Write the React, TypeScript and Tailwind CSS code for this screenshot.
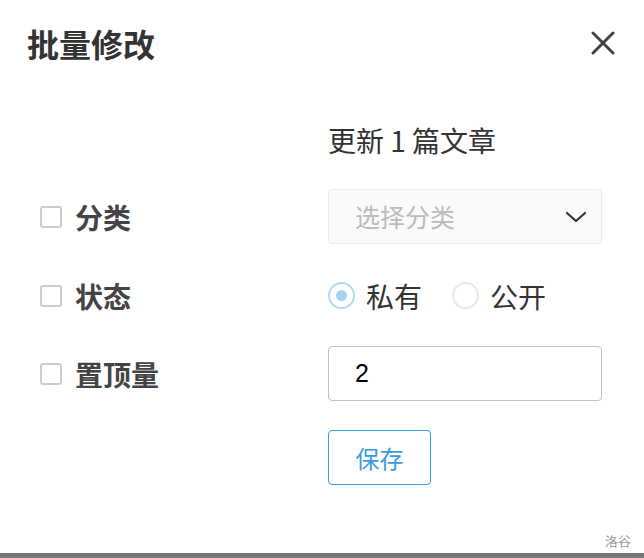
import React from "react";

const font = "font-['Noto_Sans_CJK_SC','Noto_Sans',sans-serif]";

const Checkbox: React.FC<{ label: string }> = ({ label }) => (
  <div className="flex items-center gap-[13px]">
    <span className="w-[22px] h-[22px] border-2 border-[#cccccc] rounded-[3px] bg-white" />
    <span className="text-[28px] font-bold text-[#444444] leading-none">{label}</span>
  </div>
);

const Radio: React.FC<{ label: string; checked?: boolean }> = ({ label, checked }) => (
  <div className="flex items-center gap-[11px]">
    <span
      className={
        checked
          ? "w-[27px] h-[27px] rounded-full border-[2.5px] border-[#b3d9f2] flex items-center justify-center"
          : "w-[27px] h-[27px] rounded-full border-[2.5px] border-[#e8e8e8]"
      }
    >
      {checked && <span className="w-[11px] h-[11px] rounded-full bg-[#a9d2f0]" />}
    </span>
    <span className="text-[28px] text-[#333333] leading-none">{label}</span>
  </div>
);

export default function App() {
  return (
    <div className={`w-[644px] min-h-screen bg-white flex flex-col ${font}`}>
      {/* header */}
      <div className="h-[86px] flex items-center justify-between pl-[27px] pr-[29px]">
        <h1 className="text-[32px] font-bold text-[#333333] leading-none">批量修改</h1>
        <svg width="24" height="24" viewBox="0 0 24 24" className="text-[#444444]">
          <path d="M2 2 L22 22 M22 2 L2 22" stroke="currentColor" strokeWidth="3" strokeLinecap="round" />
        </svg>
      </div>

      {/* form */}
      <div className="pl-[40px] grid grid-cols-[288px_274px]">
        <div />
        <div className="h-[55px] mt-[26px] flex items-center text-[28px] text-[#333333]">
          更新 1 篇文章
        </div>

        <div className="mt-[22px] flex items-center">
          <Checkbox label="分类" />
        </div>
        <div className="mt-[22px] h-[55px] border border-[#ececec] bg-[#fafafa] rounded-[4px] flex items-center justify-between pl-[26px] pr-[14px]">
          <span className="text-[25px] text-[#bbbbbb]">选择分类</span>
          <svg width="22" height="12" viewBox="0 0 22 12">
            <path d="M2 2 L11 10 L20 2" fill="none" stroke="#333333" strokeWidth="2.2" strokeLinecap="round" strokeLinejoin="round" />
          </svg>
        </div>

        <div className="mt-[24px] flex items-center">
          <Checkbox label="状态" />
        </div>
        <div className="mt-[24px] h-[55px] flex items-center gap-[30px]">
          <Radio label="私有" checked />
          <Radio label="公开" />
        </div>

        <div className="mt-[23px] flex items-center">
          <Checkbox label="置顶量" />
        </div>
        <div className="mt-[23px] h-[55px] border border-[#c2c2c2] rounded-[4px] flex items-center pl-[26px]">
          <span className="text-[25px] text-black font-['Liberation_Sans',sans-serif]">2</span>
        </div>

        <div />
        <div className="mt-[29px]">
          <button className="w-[103px] h-[55px] border border-[#3a9be0] rounded-[4px] text-[24px] text-[#3a9be0] bg-white">
            保存
          </button>
        </div>
      </div>

      <div className="flex-1" />
      <div className="flex justify-end pr-[13px] pb-[6px]">
        <span className="text-[13px] text-[#999999] leading-none">洛谷</span>
      </div>
      <div className="h-[5px] bg-[#767676]" />
    </div>
  );
}
